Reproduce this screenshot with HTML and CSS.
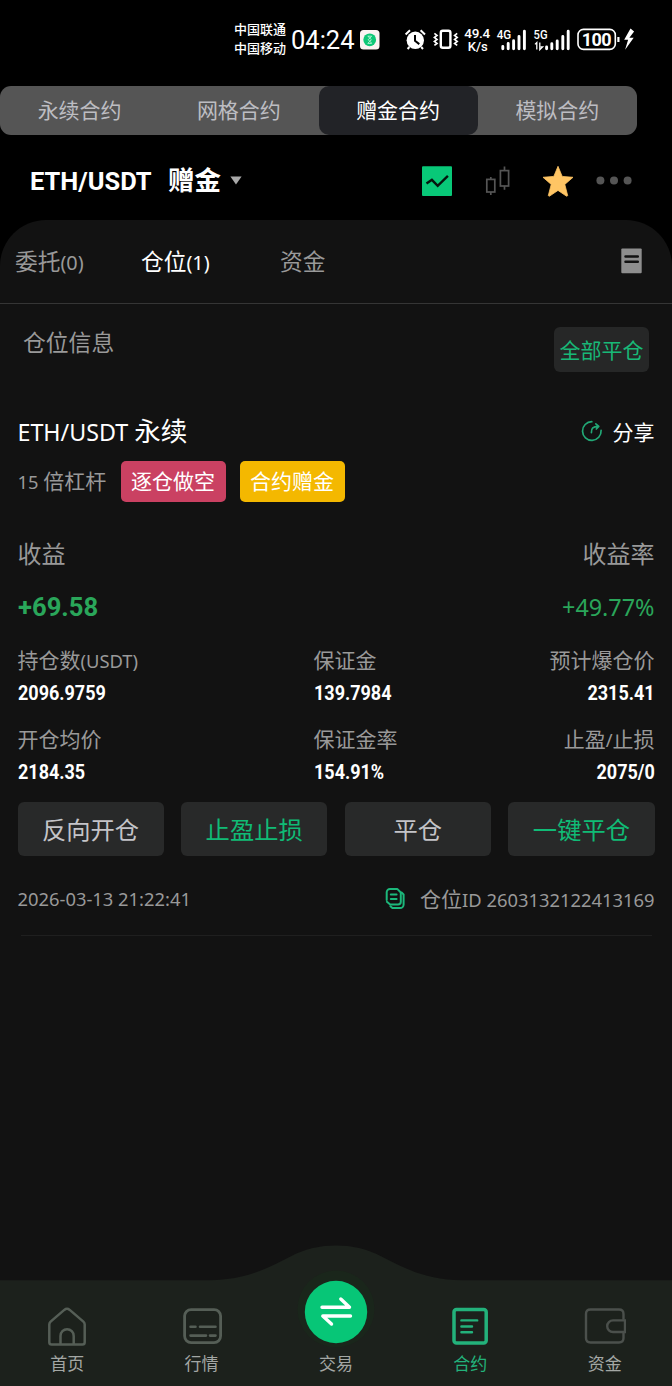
FILE: index.html
```html
<!DOCTYPE html>
<html lang="zh-CN">
<head>
<meta charset="utf-8">
<title>合约</title>
<link rel="stylesheet" href="styles.css">
</head>
<body>
<div class="screen">
  <header class="status">
    <div class="carriers"><span>中国联通</span><span>中国移动</span></div>
    <div class="clock">04:24</div>
    <svg class="status-icons" width="286" height="40" viewBox="354 20 286 40">
      <rect x="360" y="30" width="19.5" height="19.5" rx="3.5" fill="#fbf3f2"/>
      <circle cx="369.7" cy="39.8" r="6.4" fill="#0fc777"/>
      <path d="M367.6 36.2h4.2M367.6 43.4h4.2M368 36.4l3.4 3.3-3.4 3.4M371.6 36.4l-3.4 3.3 3.4 3.4" fill="none" stroke="#b9f5d8" stroke-width=".9"/>
      <circle cx="415.3" cy="40.3" r="8.7" fill="#fff"/>
      <path d="M405.6 34.5l4.4-4.3M425 34.5l-4.4-4.3M409.4 47l-1.8 2M421.2 47l1.8 2" stroke="#fff" stroke-width="2"/>
      <path d="M415 35v5.8l4.3 3.3" fill="none" stroke="#000" stroke-width="2"/>
      <rect x="440.8" y="30.8" width="9.6" height="17" rx="2" fill="none" stroke="#fff" stroke-width="2.4"/>
      <path d="M434.4 33.4l2.6 2-2.6 2 2.6 2-2.6 2 2.6 2-2.6 2M457.2 33.4l-2.6 2 2.6 2-2.6 2 2.6 2-2.6 2 2.6 2" fill="none" stroke="#fff" stroke-width="1.7"/>
      <g class="status-text">
        <text x="477.3" y="38.2" font-size="13.5" text-anchor="middle" textLength="26">49.4</text>
        <text x="477.7" y="50.6" font-size="13" text-anchor="middle" textLength="20">K/s</text>
        <text x="496.7" y="39.3" font-size="12" textLength="14.5" lengthAdjust="spacingAndGlyphs">4G</text>
        <text x="533.6" y="39.3" font-size="12" textLength="14" lengthAdjust="spacingAndGlyphs">5G</text>
      </g>
      <path d="M502.8 48.7v-2.3M508.2 48.7v-5.2M513.6 48.7v-8M519 48.7v-12.2M524.4 48.7v-17.4M546.6 48.7v-1.8M551.8 48.7v-5M557.2 48.7v-7.8M562.8 48.7v-12.2M568.2 48.7v-17.4" stroke="#fff" stroke-width="2.9" stroke-linecap="round"/>
      <path d="M535 44.4l1.8-1.8v7M539.8 42.6v7l2.8-2.8h-2" fill="none" stroke="#fff" stroke-width="1.3"/>
      <rect x="578" y="29.4" width="37.3" height="20" rx="5.5" fill="none" stroke="#fff" stroke-width="1.6"/>
      <path d="M618.4 37v5" stroke="#fff" stroke-width="2.2"/>
      <text class="status-batt" x="596.7" y="46" font-size="18" text-anchor="middle" textLength="30">100</text>
      <path d="M630.5 28.5l-6.3 11.3h3.9l-3 10 8.6-12h-4.3l4.7-6.2z" fill="#fff"/>
    </svg>
  </header>

  <nav class="segments">
    <span>永续合约</span><span>网格合约</span><span class="on">赠金合约</span><span>模拟合约</span>
  </nav>

  <div class="pair">
    <span class="pair-code din">ETH/USDT</span>
    <span class="pair-kind">赠金</span>
    <svg class="caret" width="12" height="9" viewBox="0 0 12 9"><path d="M.4.6h11.2L6 8.6z" fill="#a9a9a9"/></svg>
    <svg class="tools" width="216" height="34" viewBox="420 163 216 34">
      <rect x="422" y="165.2" width="30" height="29.8" rx="1" fill="#08c878"/>
      <path d="M426.5 182.6l5.4-3.8 5.8 6 10.2-10" fill="none" stroke="#06150e" stroke-width="2.4"/>
      <g fill="none" stroke="#555" stroke-width="1.7">
        <rect x="486.8" y="178.4" width="8" height="12.6"/><path d="M490.8 176v2.4M490.8 191v3"/>
        <rect x="500.4" y="169.6" width="8.2" height="15.4"/><path d="M504.5 165.4v4.2M504.5 185v3.8"/>
      </g>
      <path d="M558 165.3l4.2 10.1 10.8.9-8.2 7.1 2.8 10.9a.8.8 0 0 1-1.2.8L558 189.400l-8.400 5.700a.8.8 0 0 1-1.200-.8l2.800-10.900-8.200-7.100 10.800-.9z" fill="#ffc564" stroke="#ffc564" stroke-width=".8" stroke-linejoin="round"/>
      <g fill="#555"><circle cx="600.4" cy="179.600" r="4"/><circle cx="614" cy="179.600" r="4"/><circle cx="627.600" cy="179.600" r="4"/></g>
    </svg>
  </div>

  <main class="panel">
    <div class="tabs">
      <span class="tab">委托<i>(0)</i></span>
      <span class="tab on">仓位<i>(1)</i></span>
      <span class="tab">资金</span>
      <svg class="doc" width="21" height="26" viewBox="0 0 21 26"><rect x=".3" y=".4" width="20.4" height="24.800" rx="1" fill="#8e8e8e"/><path d="M4.500 8.400h12.300M4.500 13.700h12.300" stroke="#121212" stroke-width="2.500" stroke-linecap="round"/></svg>
    </div>

    <div class="info">
      <span class="info-title">仓位信息</span>
      <button class="close-all">全部平仓</button>
    </div>

    <section class="position">
      <div class="title-row">
        <h1><i>ETH/USDT</i> 永续</h1>
        <span class="share">
          <svg width="22" height="22" viewBox="0 0 22 22" fill="none" stroke="#22a876" stroke-width="1.700" stroke-linecap="round" stroke-linejoin="round"><path d="M10.800 1.700a9.300 9.300 0 1 0 9.300 8.700"/><path d="M10.400 12.600c-.2-4.200 1.600-6.200 6.800-6.300M14.800 3.800l3 2.500-2.500 2.700"/></svg>
          分享
        </span>
      </div>
      <div class="tags"><span class="lever"><i>15</i> 倍杠杆</span><b class="tag short">逐仓做空</b><b class="tag bonus">合约赠金</b></div>
      <div class="row heads"><span>收益</span><span>收益率</span></div>
      <div class="row gains"><span class="din">+69.58</span><i>+49.77%</i></div>

      <div class="grid labels"><span>持仓数<i>(USDT)</i></span><span>保证金</span><span>预计爆仓价</span></div>
      <div class="grid values"><b class="din">2096.9759</b><b class="din">139.7984</b><b class="din">2315.41</b></div>
      <div class="grid labels second"><span>开仓均价</span><span>保证金率</span><span>止盈<i>/</i>止损</span></div>
      <div class="grid values"><b class="din">2184.35</b><b class="din">154.91%</b><b class="din">2075/0</b></div>

      <div class="actions"><button>反向开仓</button><button class="go">止盈止损</button><button>平仓</button><button class="go">一键平仓</button></div>

      <div class="meta">
        <i>2026-03-13 21:22:41</i>
        <span class="pid">
          <svg width="22" height="24" viewBox="0 0 22 24" fill="none" stroke="#1cb87b" stroke-width="2" stroke-linecap="round" stroke-linejoin="round"><path d="M1.700 13V5.200a3.300 3.300 0 0 1 3.300-3.300h7.200l3.600 3.600v9.200a2.800 2.800 0 0 1-2.800 2.800H5.200l-3.300-2.700M5.800 7.600h5.800M5.800 12h5.800"/><path d="M16.600 5.600l2 1.800v10a3.600 3.600 0 0 1-3.600 3.600H7.400l-2-1.800"/></svg>
          <span>仓位<i>ID 2603132122413169</i></span>
        </span>
      </div>
      <hr>
    </section>
  </main>

  <footer class="dock">
    <svg class="dock-bg" width="672" height="141" viewBox="0 0 672 141">
      <path d="M0 35.200h210c35 0 58-12 80-23.500C306 3.500 320 .5 336 .5s30 3 46 11.200c22 11.500 45 23.500 80 23.500h210V141H0z" fill="#1c211c"/>
      <circle cx="336" cy="64" r="38.500" fill="#1a261b"/>
    </svg>
    <div class="dock-items">
      <a><svg width="40" height="40" viewBox="0 0 40 40" fill="none" stroke="#555e56" stroke-width="2.500" stroke-linejoin="round"><path d="M2.300 17.600c0-1.400.4-2.200 1.300-3L17.300 2.900c1.900-1.500 3.500-1.500 5.400 0l13.700 11.700c.9.800 1.300 1.600 1.300 3v17.700c0 1.500-.8 2.300-2.300 2.300H4.600c-1.500 0-2.300-.8-2.300-2.300z"/><path d="M13.500 37.300v-8.400a6.600 6.600 0 0 1 13.200 0v8.400"/></svg>首页</a>
      <a><svg width="40" height="40" viewBox="0 0 40 40" fill="none" stroke="#555e56" stroke-width="2.800"><rect x="2.600" y="2.600" width="36" height="33" rx="6.500"/><path d="M8.500 19.700h5M18 19.700h15.500M8.500 28.600H24M28 28.600h5.500" stroke-linecap="round" stroke-width="2.600"/></svg>行情</a>
      <a><svg class="swap" width="64" height="64" viewBox="0 0 64 64"><circle cx="32" cy="32" r="31.200" fill="#07c677"/><path d="M18 27.300h27.500L36.800 19M46.500 36H18.800l8.700 8" fill="none" stroke="#fff" stroke-width="3.400" stroke-linecap="round" stroke-linejoin="round"/></svg>交易</a>
      <a class="on"><svg width="40" height="40" viewBox="0 0 40 40" fill="none" stroke="#23b27b" stroke-width="3.500"><rect x="4" y="2.400" width="32.200" height="33.500" rx="2.500"/><path d="M11.400 13.400h15.800M11.400 19.500h10.600M11.400 25.200h10.600" stroke-linecap="round" stroke-width="2.400"/></svg>合约</a>
      <a><svg width="42" height="40" viewBox="0 0 42 40" fill="none" stroke="#4b504c" stroke-width="2.400"><path d="M39.500 12.800V7c0-3-1.500-4.500-4.500-4.500H6.500C3.500 2.500 2 4 2 7v24c0 3 1.500 4.500 4.500 4.500H35c3 0 4.500-1.500 4.500-4.500v-6"/><path d="M41 13.400H29a5.800 5.800 0 0 0 0 11.600h12z"/></svg>资金</a>
    </div>
  </footer>
</div>
</body>
</html>
```
FILE: styles.css
```css
* { box-sizing: border-box; margin: 0; padding: 0; }
body { background: #000; font-family: "Noto Sans CJK SC", "Noto Sans", sans-serif; }
i { font-family: "Noto Sans", sans-serif; font-style: normal; font-size: .875em; }
svg { display: block; flex: none; }
button { border: 0; font: inherit; }
.screen { width: 672px; height: 1386px; display: flex; flex-direction: column; overflow: hidden; background: #000; }
.din { font-family: Roboto, sans-serif; font-weight: 700; display: inline-block; transform-origin: left center; transform: scaleX(.9); }

.status { height: 86px; padding: 20px 0 0 234px; display: flex; align-items: flex-start; color: #fff; flex: none; }
.carriers { width: 57px; display: flex; flex-direction: column; font-size: 13px; line-height: 18.500px; font-weight: 500; white-space: nowrap; }
.clock { width: 63px; font: 400 25.500px/40px Roboto, sans-serif; white-space: nowrap; }
.status-text { font-family: Roboto, sans-serif; font-weight: 500; fill: #fff; }
.status-batt { font-family: Roboto, sans-serif; font-weight: 700; fill: #fff; }

.segments { width: 637px; height: 49px; flex: none; display: grid; grid-template-columns: repeat(4, 1fr); border-radius: 11px; background: #555; color: #bdbdc2; font-size: 21px; line-height: 47px; text-align: center; overflow: hidden; }
.segments .on { background: #222327; color: #fff; border-radius: 10px; }

.pair { height: 85px; flex: none; padding: 0 36px 0 30px; display: flex; align-items: center; color: #fff; }
.pair-code { width: 138px; font-size: 26.500px; line-height: 40px; transform: scaleX(.96); padding-top: 6px; }
.pair-kind { width: 62px; font-size: 26.500px; line-height: 40px; font-weight: 700; padding-top: 3px; }
.caret { margin-top: 6px; }
.tools { margin-left: auto; margin-top: 6px; }

.panel { flex: 1; background: #121212; border-radius: 46px 46px 0 0; }
.tabs { height: 84px; padding: 0 30px 2px 15px; border-bottom: 1px solid #353535; display: flex; align-items: center; font-size: 22.700px; color: #999; }
.tab { width: 126px; white-space: nowrap; }
.tab.on { width: 139px; color: #fff; }
.doc { margin-left: auto; }
.info { display: flex; justify-content: space-between; padding: 22.500px 23px 0 23px; color: #999; }
.info-title { font-size: 22.800px; line-height: 29px; }
.close-all { width: 95px; height: 45.500px; border-radius: 6px; background: #262727; color: #18b877; font-size: 21px; line-height: 42px; white-space: nowrap; }

.position { padding: 0 17.500px; color: #999; font-size: 21px; }
.title-row { margin-top: 39px; height: 40px; display: flex; justify-content: space-between; align-items: center; color: #fff; }
h1 { font-size: 26.600px; font-weight: 400; line-height: 38px; }
.share { display: flex; align-items: center; gap: 10px; line-height: 38px; }
.tags { margin-top: 10px; height: 40.500px; display: flex; line-height: 38px; }
.lever { width: 103px; white-space: nowrap; }
.tag { width: 105px; margin-right: 14px; border-radius: 5px; color: #fff; font-weight: 400; text-align: center; }
.short { background: #ca4162; }
.bonus { background: #f4b800; }
.row { display: flex; justify-content: space-between; align-items: center; }
.heads { margin-top: 36.500px; height: 30px; font-size: 24px; line-height: 28px; }
.gains { margin-top: 19px; height: 40px; font-size: 26.700px; color: #2aa65a; }
.gains .din { transform: scaleX(.96); }
.grid { display: grid; grid-template-columns: 296px 1fr 1fr; white-space: nowrap; }
.grid > :last-child { justify-self: end; }
.labels { margin-top: 18px; height: 30px; line-height: 28px; }
.labels.second { margin-top: 21px; }
.values { margin-top: 8px; height: 20px; line-height: 21px; font-size: 20px; color: #fff; }
.values .din { justify-self: start; }
.values .din:last-child { transform-origin: right center; justify-self: end; }
.actions { margin-top: 19.500px; display: grid; grid-template-columns: repeat(4, 1fr); gap: 17.500px; }
.actions button { height: 54.500px; border-radius: 6px; background: #282929; color: #c4c4c8; font-size: 24.300px; line-height: 52px; }
.actions .go { color: #10bb76; }
.meta { margin-top: 28px; height: 30px; display: flex; justify-content: space-between; align-items: center; line-height: 28px; }
.pid { display: flex; align-items: center; gap: 13px; }
hr { border: 0; height: 1px; margin: 21px 3px 0; background: #1f1f1f; }

.dock { position: absolute; left: 0; top: 1245px; width: 672px; height: 141px; }
.dock-bg { position: absolute; left: 0; top: 0; }
.dock-items { position: relative; height: 141px; display: grid; grid-template-columns: repeat(5, 134.400px); }
.dock-items a { display: flex; flex-direction: column; align-items: center; justify-content: flex-end; padding-bottom: 11px; color: #a3a7a4; font-size: 17px; line-height: 24px; gap: 4px; }
.dock-items .swap { margin-bottom: 3px; }
.dock-items .on { color: #23b27b; }
```
